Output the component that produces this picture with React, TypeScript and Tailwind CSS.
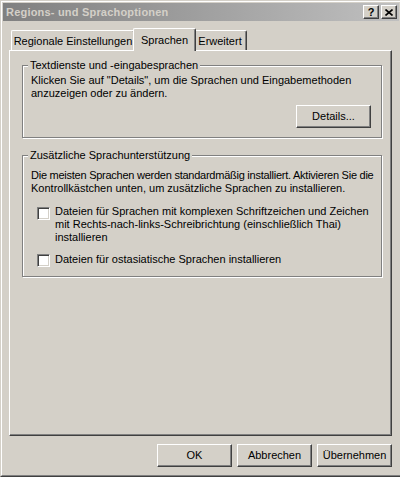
import React from 'react';

const raised =
  'border border-t-white border-l-white border-r-[#404040] border-b-[#404040] shadow-[inset_-1px_-1px_#808080]';

function Button({ label, className = '' }: { label: string; className?: string }) {
  return (
    <div className={`h-[23px] flex items-center justify-center bg-[#d4d0c8] ${raised} ${className}`}>
      <span className="leading-[13px]">{label}</span>
    </div>
  );
}

function Checkbox() {
  return (
    <div className="w-[13px] h-[13px] shrink-0 bg-white border border-t-[#808080] border-l-[#808080] border-r-white border-b-white shadow-[inset_1px_1px_#404040,inset_-1px_-1px_#d4d0c8]" />
  );
}

function Group({ title, className = '', children }: { title: string; className?: string; children: React.ReactNode }) {
  return (
    <div
      className={`relative ml-[12px] w-[360px] border border-[#808080] shadow-[inset_1px_1px_#ffffff,1px_1px_#ffffff] ${className}`}
    >
      <span className="absolute -top-[7px] left-[5px] px-[2px] bg-[#d4d0c8] leading-[13px]">{title}</span>
      {children}
    </div>
  );
}

export default function App() {
  return (
    <div className="w-[400px] h-[477px] overflow-hidden bg-white">
      <div className="w-[402px] h-[477px] bg-[#d4d0c8] border border-t-[#d4d0c8] border-l-[#d4d0c8] border-r-[#404040] border-b-[#404040] font-['Liberation_Sans',Arial,sans-serif] text-[11px] text-black">
        <div className="h-full border border-t-white border-l-white border-r-[#808080] border-b-[#808080] p-px flex flex-col">
          {/* Title bar (inactive) */}
          <div className="h-[18px] shrink-0 flex items-center pl-[3px] pr-[2px] bg-gradient-to-r from-[#808080] to-[#c0c0c0]">
            <span className="font-bold text-[#d4d0c8] text-[11px] leading-[13px] tracking-[0.2px]">Regions- und Sprachoptionen</span>
            <div className="ml-auto flex gap-[2px]">
              <div className={`w-[16px] h-[14px] flex items-center justify-center bg-[#d4d0c8] ${raised}`}>
                <span className="font-bold text-[11px] leading-[11px]">?</span>
              </div>
              <div className={`w-[16px] h-[14px] flex items-center justify-center bg-[#d4d0c8] ${raised}`}>
                <svg width="8" height="7" viewBox="0 0 8 7">
                  <path d="M0.5 0.5 L7.5 6.5 M7.5 0.5 L0.5 6.5" stroke="#000" strokeWidth="1.6" />
                </svg>
              </div>
            </div>
          </div>

          <div className="pl-[6px] pt-[7px]">
            {/* Tabs */}
            <div className="flex items-end h-[22px] relative z-10">
              <div className="ml-[2px] w-[124px] h-[20px] flex items-center justify-center border-t border-l border-t-white border-l-white rounded-tl-[2px] border-r border-r-[#404040] rounded-tr-[2px] shadow-[inset_-1px_0_#808080]">
                <span className="leading-[13px] mt-[2px]">Regionale Einstellungen</span>
              </div>
              <div className="-ml-[2px] w-[63px] h-[23px] -mb-px flex items-center justify-center bg-[#d4d0c8] border-t border-l border-t-white border-l-white rounded-tl-[2px] border-r border-r-[#404040] rounded-tr-[2px] shadow-[inset_-1px_0_#808080] z-10">
                <span className="leading-[13px]">Sprachen</span>
              </div>
              <div className="-ml-[2px] w-[53px] h-[20px] flex items-center justify-center border-t border-t-white border-r border-r-[#404040] rounded-tr-[2px] shadow-[inset_-1px_0_#808080]">
                <span className="leading-[13px] mt-[2px]">Erweitert</span>
              </div>
            </div>

            {/* Tab panel */}
            <div className={`w-[383px] h-[386px] ${raised} pt-[14px]`}>
              <Group title="Textdienste und -eingabesprachen" className="pt-[8px] pl-[8px] pb-[9px]">
                <p className="leading-[13px] whitespace-nowrap">
                  Klicken Sie auf "Details", um die Sprachen und Eingabemethoden
                  <br />
                  anzuzeigen oder zu ändern.
                </p>
                <div className="flex justify-end mt-[5px] pr-[10px]">
                  <Button label="Details..." className="w-[75px]" />
                </div>
              </Group>

              <Group title="Zusätzliche Sprachunterstützung" className="mt-[17px] pt-[13px] pl-[8px] pb-[9px]">
                <p className="leading-[13px] whitespace-nowrap">
                  <span className="tracking-[-0.25px]">
                    Die meisten Sprachen werden standardmäßig installiert. Aktivieren Sie die
                  </span>
                  <br />
                  Kontrollkästchen unten, um zusätzliche Sprachen zu installieren.
                </p>
                <div className="flex gap-[5px] pl-[6px] mt-[10px]">
                  <div className="pt-[2px]">
                    <Checkbox />
                  </div>
                  <p className="leading-[13px] whitespace-nowrap">
                    Dateien für Sprachen mit komplexen Schriftzeichen und Zeichen
                    <br />
                    mit Rechts-nach-links-Schreibrichtung (einschließlich Thai)
                    <br />
                    installieren
                  </p>
                </div>
                <div className="flex gap-[5px] pl-[6px] mt-[9px]">
                  <div className="pt-[1px]">
                    <Checkbox />
                  </div>
                  <p className="leading-[13px] whitespace-nowrap">Dateien für ostasiatische Sprachen installieren</p>
                </div>
              </Group>
            </div>

            {/* Dialog buttons */}
            <div className="w-[383px] flex justify-end gap-[5px] mt-[8px]">
              <Button label="OK" className="w-[75px]" />
              <Button label="Abbrechen" className="w-[75px]" />
              <Button label="Übernehmen" className="w-[75px]" />
            </div>
          </div>
        </div>
      </div>
    </div>
  );
}
